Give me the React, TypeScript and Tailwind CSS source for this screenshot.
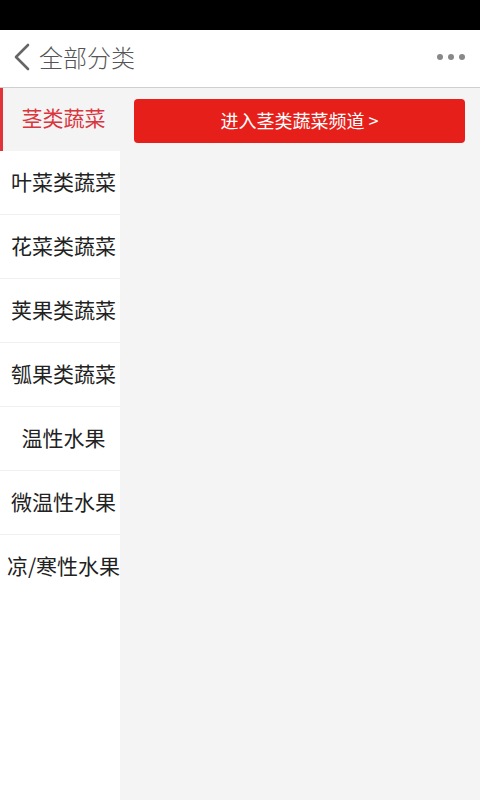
import { useState } from 'react'

const categories = [
  '茎类蔬菜',
  '叶菜类蔬菜',
  '花菜类蔬菜',
  '荚果类蔬菜',
  '瓠果类蔬菜',
  '温性水果',
  '微温性水果',
  '凉/寒性水果',
]

const font = { fontFamily: '"Noto Sans CJK SC", "Noto Sans", sans-serif' }

export default function App() {
  const [active, setActive] = useState(0)

  return (
    <div className="w-[480px] h-[800px] flex flex-col bg-[#f4f4f4] overflow-hidden" style={font}>
      {/* status bar */}
      <div className="h-[30px] shrink-0 bg-black" />

      {/* header */}
      <header className="h-[58px] shrink-0 flex items-center justify-between bg-white border-b border-[#cfcfcf]">
        <div className="flex items-center pb-[3px]">
          <svg className="ml-[12px]" width="20" height="30" viewBox="0 0 20 30" fill="none">
            <path d="M16 3 L4 15 L16 27" stroke="#666" strokeWidth="2.6" strokeLinecap="round" strokeLinejoin="round" />
          </svg>
          <span className="ml-[7px] text-[24px] leading-none text-[#555] font-light">全部分类</span>
        </div>
        <div className="flex items-center gap-[5px] mr-[15px] pb-[3px]">
          <span className="w-[6px] h-[6px] rounded-full bg-[#888]" />
          <span className="w-[6px] h-[6px] rounded-full bg-[#888]" />
          <span className="w-[6px] h-[6px] rounded-full bg-[#888]" />
        </div>
      </header>

      <div className="flex flex-1 min-h-0">
        {/* sidebar */}
        <nav className="w-[120px] shrink-0 bg-white flex flex-col">
          {categories.map((name, i) =>
            i === active ? (
              <button
                key={name}
                onClick={() => setActive(i)}
                className="h-[63px] shrink-0 flex items-center justify-center pb-[3px] pl-[4px] bg-[#f4f4f4] border-l-[3px] border-[#e0343a] text-[21px] text-[#d9363e] whitespace-nowrap"
              >
                {name}
              </button>
            ) : (
              <button
                key={name}
                onClick={() => setActive(i)}
                className={
                  i === categories.length - 1
                    ? 'h-[64px] shrink-0 flex items-center justify-center pb-[2px] pl-[7px] text-[21px] text-[#222] whitespace-nowrap'
                    : 'h-[64px] shrink-0 flex items-center justify-center pb-[2px] pl-[7px] border-b border-[#f0f0f0] text-[21px] text-[#222] whitespace-nowrap'
                }
              >
                {name}
              </button>
            )
          )}
        </nav>

        {/* content */}
        <main className="flex-1 pl-[14px] pr-[15px] pt-[11px]">
          <button className="w-full h-[44px] rounded-[4px] bg-[#e61f1a] text-white text-[18px] flex items-center justify-center pb-[2px]">
            进入{categories[active]}频道 &gt;
          </button>
        </main>
      </div>
    </div>
  )
}
